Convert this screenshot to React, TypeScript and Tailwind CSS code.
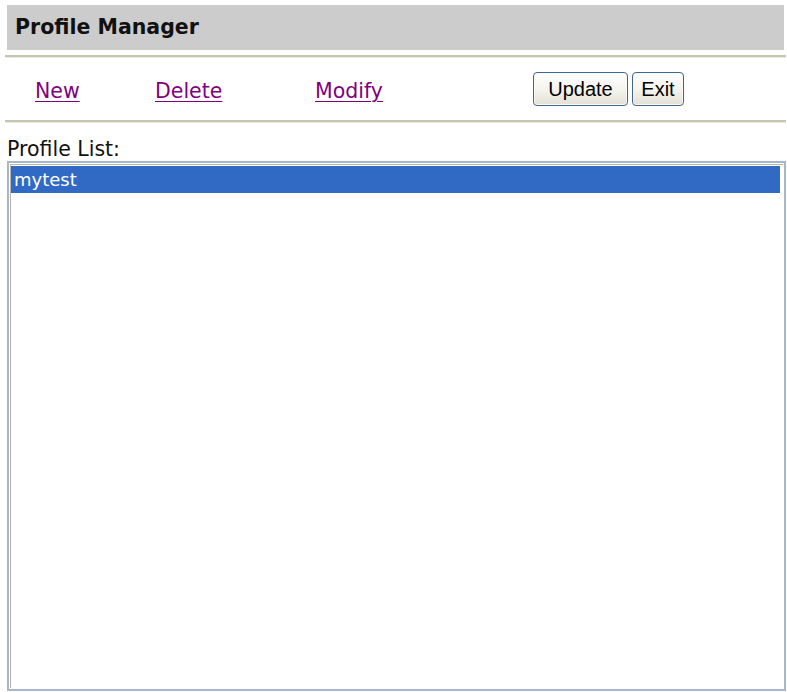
import React from "react";

const verdana = { fontFamily: '"DejaVu Sans", Verdana, sans-serif' };

function XPButton({ label, w }: { label: string; w: string }) {
  return (
    <button
      className={`${w} h-[34px] rounded-[4px] border-[1.5px] border-[#40668f] bg-gradient-to-b from-[#ffffff] via-[#f5f4ee] to-[#e3e1d6] text-[20px] leading-none text-black shadow-[inset_0_0_0_1px_#fbfaf6]`}
      style={{ fontFamily: '"Liberation Sans", Arial, sans-serif' }}
    >
      {label}
    </button>
  );
}

export default function App() {
  return (
    <div className="w-[787px] h-[692px] bg-white overflow-hidden" style={verdana}>
      <div className="pt-[5px] pl-[5px] pr-[1px]">
        <div className="mx-[2px] h-[45px] bg-[#cccccc] flex items-center pl-[8px]">
          <span className="text-[20.5px] font-bold text-[#111]">Profile Manager</span>
        </div>
        <div className="mt-[5px] h-[3px] border-t-[2px] border-[#c6c5ae] border-b border-b-[#ecebe0]" />
        <div className="h-[62px] flex items-center pl-[30px]">
          <div className="w-[120px] pt-[4px]">
            <a href="#" className="text-[20.5px] text-[#800080] underline decoration-1 underline-offset-[3px]">
              New
            </a>
          </div>
          <div className="w-[160px] pt-[4px]">
            <a href="#" className="text-[20.5px] text-[#800080] underline decoration-1 underline-offset-[3px]">
              Delete
            </a>
          </div>
          <div className="w-[218px] pt-[4px]">
            <a href="#" className="text-[20.5px] text-[#800080] underline decoration-1 underline-offset-[3px]">
              Modify
            </a>
          </div>
          <div className="flex gap-[4px]">
            <XPButton label="Update" w="w-[95px]" />
            <XPButton label="Exit" w="w-[52px]" />
          </div>
        </div>
        <div className="h-[3px] border-t-[2px] border-[#c6c5ae] border-b border-b-[#ecebe0]" />
        <div className="mt-[15px] ml-[2px] text-[20.5px] leading-[22px] text-[#111]">Profile List:</div>
        <div className="mt-[1px] ml-[2px] h-[530px] border-[2px] border-[#a7b6cb] bg-white p-[1px]">
          <div className="h-full border-l border-t border-[#b9b4a8] pt-[1px] pr-[3px]">
            <div className="h-[27px] bg-[#316ac5] text-white text-[18px] flex items-center pl-[3px]">
              mytest
            </div>
          </div>
        </div>
      </div>
    </div>
  );
}
